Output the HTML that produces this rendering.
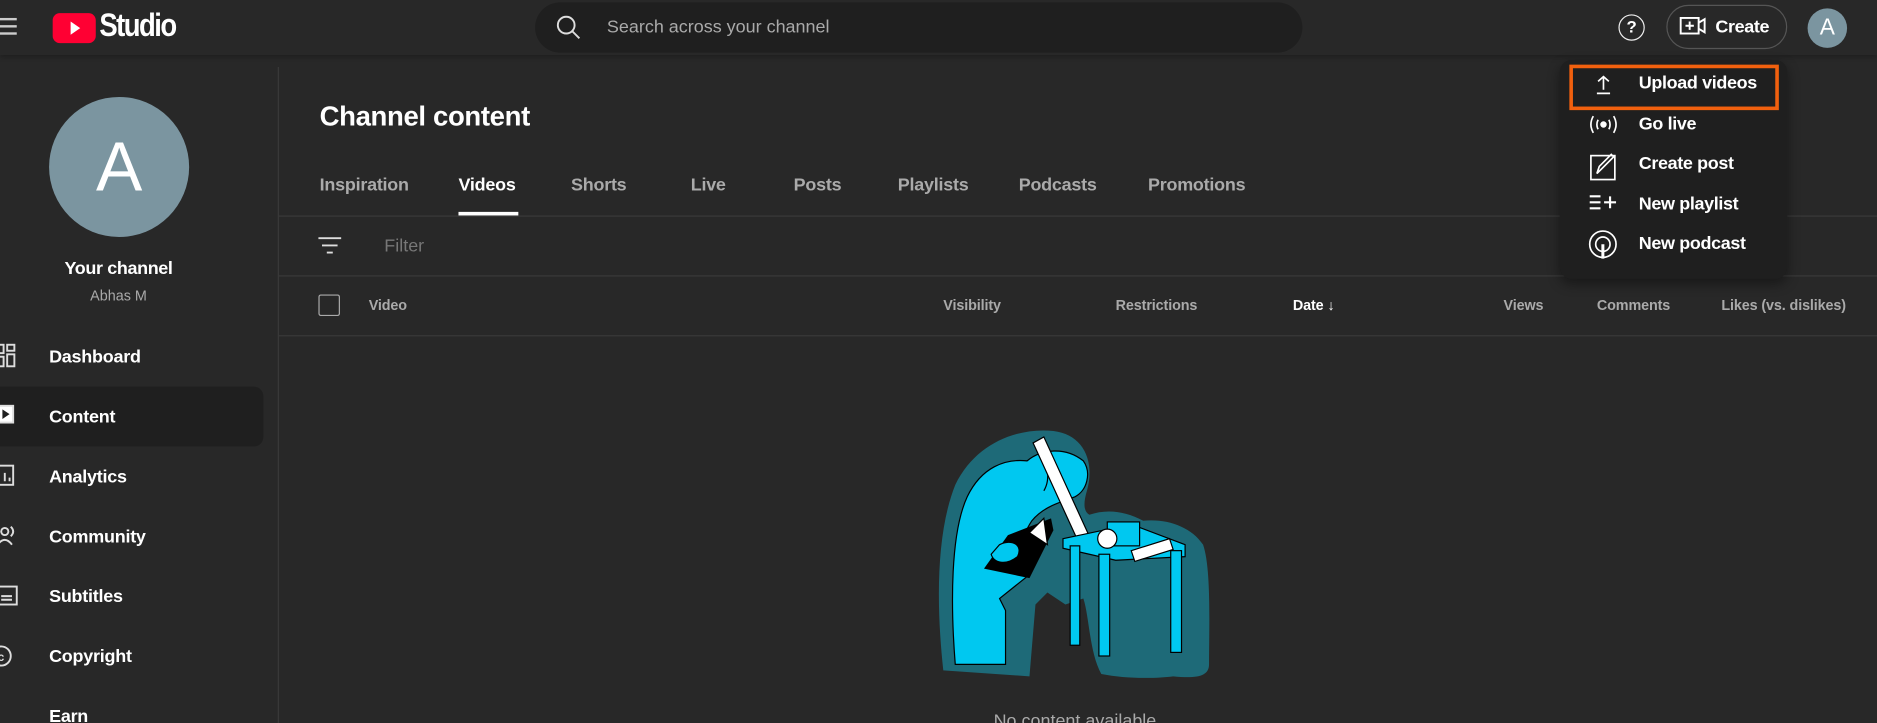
<!DOCTYPE html>
<html><head><meta charset="utf-8"><style>
*{margin:0;padding:0;box-sizing:border-box}
html,body{width:1877px;height:723px;overflow:hidden;background:#282828}
#w{width:1568px;height:604px;transform:scale(1.19707);transform-origin:0 0;position:relative;font-family:"Liberation Sans",sans-serif;color:#fff;background:#282828}
.a{position:absolute}
.hdr{left:0;top:0;width:1568px;height:46px;background:#282828;box-shadow:0 2px 4px rgba(0,0,0,.25)}
.nav{left:0;width:220px;height:50px;font-size:15px;font-weight:bold;display:flex;align-items:center;padding-left:41px;letter-spacing:-.2px}
.tab{top:146px;font-size:15px;color:#aaa;font-weight:bold;letter-spacing:-.2px}
.col{top:248px;font-size:12px;color:#aaa;font-weight:bold;letter-spacing:-.1px}
.mi{left:1369px;font-size:15px;font-weight:bold;letter-spacing:-.3px}
</style></head><body><div id="w">
<div class="a hdr"></div>
<div class="a" style="left:0;top:15px;width:14px;height:2px;background:#ccc"></div>
<div class="a" style="left:0;top:21px;width:14px;height:2px;background:#ccc"></div>
<div class="a" style="left:0;top:27px;width:14px;height:2px;background:#ccc"></div>
<div class="a" style="left:44px;top:11px;width:36px;height:25px;background:#ff0033;border-radius:6px"></div>
<svg class="a" style="left:44px;top:11px" width="36" height="25"><path d="M15 7 L23 12.5 L15 18Z" fill="#fff"/></svg>
<div class="a" style="left:83px;top:6px;font-size:27px;font-weight:bold;letter-spacing:-1.5px;transform:scaleX(.85);transform-origin:0 0">Studio</div>
<div class="a" style="left:447px;top:2px;width:641px;height:42px;border-radius:21px;background:#1f1f1f"></div>
<svg class="a" style="left:464px;top:12px" width="22" height="22" fill="none" stroke="#ddd" stroke-width="1.6"><circle cx="9" cy="9" r="7"/><path d="M14 14 L20 20"/></svg>
<div class="a" style="left:507px;top:14px;font-size:15px;color:#aaa">Search across your channel</div>
<div class="a" style="left:1352px;top:12px;width:22px;height:22px;border:1.6px solid #eee;border-radius:50%;font-size:14px;text-align:center;line-height:19px;font-weight:bold">?</div>
<div class="a" style="left:1392px;top:4px;width:101px;height:37px;border:1px solid #555;border-radius:19px"></div>
<svg class="a" style="left:1403px;top:13px" width="24" height="18" fill="none" stroke="#fff" stroke-width="1.6"><rect x="1" y="2" width="15" height="13"/><path d="M16 6 L21 3 V14 L16 11 M8.5 5 V12 M5 8.5 H12"/></svg>
<div class="a" style="left:1433px;top:14px;font-size:15px;font-weight:bold;letter-spacing:-.3px">Create</div>
<div class="a" style="left:1510px;top:7px;width:33px;height:33px;border-radius:50%;background:#7b95a0;font-size:19px;text-align:center;line-height:33px">A</div>
<div class="a" style="left:232px;top:56px;width:1px;height:548px;background:#3a3a3a"></div>
<div class="a" style="left:41px;top:81px;width:117px;height:117px;border-radius:50%;background:#7b95a0;font-size:58px;text-align:center;line-height:117px">A</div>
<div class="a" style="left:0;top:216px;width:198px;text-align:center;font-size:15px;font-weight:bold;letter-spacing:-.3px">Your channel</div>
<div class="a" style="left:0;top:240px;width:198px;text-align:center;font-size:12px;color:#aaa">Abhas M</div>
<div class="a nav" style="top:273px">Dashboard</div>
<div class="a nav" style="top:323px;background:#1f1f1f;border-radius:0 8px 8px 0">Content</div>
<div class="a nav" style="top:373px">Analytics</div>
<div class="a nav" style="top:423px">Community</div>
<div class="a nav" style="top:473px">Subtitles</div>
<div class="a nav" style="top:523px">Copyright</div>
<div class="a nav" style="top:573px">Earn</div>
<svg class="a" style="left:0;top:287px" width="16" height="320" fill="none" stroke="#ddd" stroke-width="1.6">
<rect x="-3" y="1" width="6" height="7"/><rect x="6" y="1" width="6" height="5"/><rect x="6" y="9" width="6" height="10"/><rect x="-3" y="11" width="6" height="8"/>
<rect x="-3" y="52" width="14" height="14" fill="#fff"/><path d="M2 55 L8 59 L2 63Z" fill="#1f1f1f" stroke="none"/>
<rect x="-3" y="102" width="14" height="16"/><path d="M4 108 V115 M8 112 V115"/>
<circle cx="4" cy="157" r="3"/><path d="M-2 168 Q4 160 10 168 M9 153 Q13 157 9 161"/>
<rect x="-3" y="203" width="17" height="15"/><path d="M1 211 H10 M1 214 H10"/>
<circle cx="1" cy="261" r="8"/><text x="-2" y="265" font-size="10" fill="#ddd" stroke="none" font-weight="bold">c</text>
</svg>
<div class="a" style="left:267px;top:84px;font-size:23px;font-weight:bold;letter-spacing:-.3px">Channel content</div>
<div class="a tab" style="left:267px">Inspiration</div>
<div class="a tab" style="left:383px;color:#fff">Videos</div>
<div class="a" style="left:383px;top:177px;width:50px;height:3px;background:#fff"></div>
<div class="a tab" style="left:477px">Shorts</div>
<div class="a tab" style="left:577px">Live</div>
<div class="a tab" style="left:663px">Posts</div>
<div class="a tab" style="left:750px">Playlists</div>
<div class="a tab" style="left:851px">Podcasts</div>
<div class="a tab" style="left:959px">Promotions</div>
<div class="a" style="left:233px;top:180px;width:1335px;height:1px;background:#3a3a3a"></div>
<svg class="a" style="left:265px;top:196px" width="22" height="18" stroke="#ddd" stroke-width="1.6"><path d="M1 3 H20 M4 9 H17 M8 15 H13"/></svg>
<div class="a" style="left:321px;top:197px;font-size:15px;color:#777">Filter</div>
<div class="a" style="left:233px;top:230px;width:1335px;height:1px;background:#3a3a3a"></div>
<div class="a" style="left:266px;top:246px;width:18px;height:18px;border:1.6px solid #aaa;border-radius:2px"></div>
<div class="a col" style="left:308px">Video</div>
<div class="a col" style="left:788px">Visibility</div>
<div class="a col" style="left:932px">Restrictions</div>
<div class="a col" style="left:1080px;color:#fff">Date ↓</div>
<div class="a col" style="left:1256px">Views</div>
<div class="a col" style="left:1334px">Comments</div>
<div class="a col" style="left:1438px">Likes (vs. dislikes)</div>
<div class="a" style="left:233px;top:280px;width:1335px;height:1px;background:#3a3a3a"></div>
<!-- illustration: coords relative to (780,355) -->
<svg class="a" style="left:780px;top:355px" width="240" height="215" viewBox="0 0 240 215">
<path d="M8 205 C2 150 2 90 18 50 C35 15 70 2 100 5 C125 8 135 30 128 55 C125 65 125 72 130 75 C145 70 160 72 175 80 C195 78 215 85 225 100 C232 120 230 170 230 200 C230 210 220 212 200 210 C185 212 160 212 140 208 C130 190 130 160 125 145 L110 150 L95 140 L85 150 L80 210 Z" fill="#1e6a78"/>
<path d="M18 200 C14 150 14 90 28 60 C40 35 60 28 78 30 C90 20 110 18 125 30 C132 40 128 55 118 60 C105 65 92 68 82 80 C72 95 70 110 80 125 L55 145 L60 155 L60 200 Z" fill="#00c8f0" stroke="#000" stroke-width="1"/>
<path d="M88 25 C95 28 98 45 92 55" fill="none" stroke="#000"/>
<path d="M62 92 L98 78 L100 88 L80 128 L42 120 Z" fill="#000"/>
<path d="M55 100 C65 95 75 100 70 110 C60 118 50 115 48 108Z" fill="#00c8f0" stroke="#000"/>
<path d="M83 15 L92 10 L130 93 L121 98 Z" fill="#fff" stroke="#000"/>
<path d="M80 90 L92 78 L95 100Z" fill="#fff" stroke="#000"/>
<path d="M108 95 L165 83 L210 100 L210 110 L152 113 L108 103 Z" fill="#00c8f0" stroke="#000"/>
<rect x="114" y="101" width="8" height="83" fill="#00c8f0" stroke="#000"/>
<rect x="138" y="108" width="9" height="85" fill="#00c8f0" stroke="#000"/>
<rect x="198" y="105" width="9" height="85" fill="#00c8f0" stroke="#000"/>
<rect x="145" y="81" width="27" height="20" fill="#00c8f0" stroke="#000"/>
<circle cx="145" cy="95" r="8" fill="#fff" stroke="#000"/>
<path d="M165 105 L197 95 L200 104 L168 114Z" fill="#fff" stroke="#000"/>
</svg>
<div class="a" style="left:830px;top:594px;font-size:15px;color:#aaa">No content available</div>
<div class="a" style="left:1303px;top:50px;width:190px;height:183px;background:#1f1f1f;border-radius:10px;box-shadow:0 4px 10px rgba(0,0,0,.4)"></div>
<div class="a" style="left:1311px;top:54px;width:175px;height:38px;border:3px solid #f1600e"></div>
<svg class="a" style="left:1326px;top:60px" width="30" height="160" fill="none" stroke="#fff" stroke-width="1.4">
<path d="M8 18 H19 M13.5 15 V4 M9 8 L13.5 4 L18 8"/>
<circle cx="13.5" cy="44" r="2" fill="#fff"/><path d="M9 40 Q7 44 9 48 M18 40 Q20 44 18 48 M5 37 Q1 44 5 51 M22 37 Q26 44 22 51"/>
<rect x="3" y="70" width="20" height="20"/><path d="M8 85 L10 79 L20 69 L22 71 L12 81 Z"/>
<path d="M2 104 H11 M2 109 H11 M2 114 H11 M14 109 H24 M19 104 V114" stroke-width="1.8"/>
<circle cx="13" cy="144" r="11"/><circle cx="13" cy="144" r="6"/><path d="M13 144 V156" stroke-width="2.5"/>
</svg>
<div class="a mi" style="top:61px">Upload videos</div>
<div class="a mi" style="top:95px">Go live</div>
<div class="a mi" style="top:128px">Create post</div>
<div class="a mi" style="top:162px">New playlist</div>
<div class="a mi" style="top:195px">New podcast</div>
</div></body></html>
